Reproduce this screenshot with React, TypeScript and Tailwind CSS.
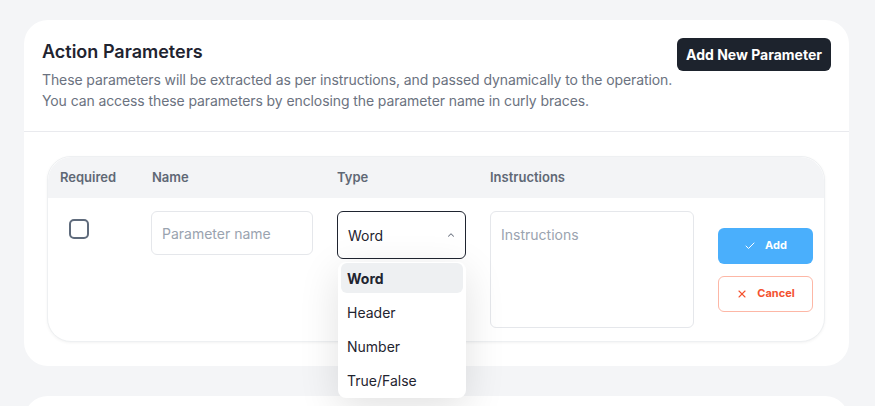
import React from "react";

const font = { fontFamily: "Inter, 'Noto Sans', sans-serif" };

function Check() {
  return (
    <svg width="12" height="12" viewBox="0 0 24 24" fill="none" stroke="currentColor" strokeWidth="2" strokeLinecap="round" strokeLinejoin="round">
      <path d="M20 6 9 17l-5-5" />
    </svg>
  );
}

function XIcon() {
  return (
    <svg width="12" height="12" viewBox="0 0 24 24" fill="none" stroke="currentColor" strokeWidth="2.2" strokeLinecap="round" strokeLinejoin="round">
      <path d="M18 6 6 18" />
      <path d="m6 6 12 12" />
    </svg>
  );
}

function ChevronUp() {
  return (
    <svg width="10" height="10" viewBox="0 0 24 24" fill="none" stroke="currentColor" strokeWidth="2.5" strokeLinecap="round" strokeLinejoin="round">
      <path d="m6 15 6-6 6 6" />
    </svg>
  );
}

export default function App() {
  const options = ["Word", "Header", "Number", "True/False"];
  return (
    <div className="min-h-[406px] h-[406px] overflow-hidden bg-[#f4f5f7] pt-5 pl-6 pr-[26px]" style={font}>
      <div className="bg-white rounded-3xl">
        <div className="flex justify-between px-[18px] pt-[18px] pb-5">
          <div>
            <h2 className="text-[18px] leading-[28px] font-semibold text-[#1f2430]">Action Parameters</h2>
            <p className="mt-[3px] text-[14px] leading-[21px] text-[#6b7280] whitespace-nowrap tracking-[-0.1px]">
              These parameters will be extracted as per instructions, and passed dynamically to the operation.
              <br />
              You can access these parameters by enclosing the parameter name in curly braces.
            </p>
          </div>
          <button className="h-[33px] px-[9px] rounded-md bg-[#1d232d] text-white text-[14px] font-bold whitespace-nowrap">
            Add New Parameter
          </button>
        </div>
        <div className="border-t border-[#e9eaee]" />
        <div className="p-6 pl-[23px]">
          <div className="rounded-3xl border border-[#eef0f2] shadow-[0_1px_3px_rgba(0,0,0,0.05)] bg-white">
            <div className="flex items-center h-[41px] bg-[#f3f4f6] rounded-t-3xl pl-[11px] pr-[11px] gap-6 text-[13px] font-semibold text-[#5f6875]">
              <div className="w-[68px] shrink-0 pl-[1px]">Required</div>
              <div className="w-[162px] shrink-0 pl-[1px]">Name</div>
              <div className="w-[129px] shrink-0">Type</div>
              <div className="w-[204px] shrink-0">Instructions</div>
            </div>
            <div className="flex pl-[11px] pr-[11px] pt-[13px] pb-[13px] gap-6">
              <div className="w-[68px] shrink-0">
                <div className="ml-[10px] mt-2 w-5 h-5 rounded-[5px] border-2 border-[#5f6b7c]" />
              </div>
              <div className="w-[162px] shrink-0">
                <div className="h-[44px] rounded-md border border-[#e5e7eb] flex items-center px-[10px] text-[14px] text-[#9aa3af]">
                  Parameter name
                </div>
              </div>
              <div className="w-[129px] shrink-0 relative">
                <div className="h-[48px] rounded-md border border-[#1f2430] flex items-center justify-between pl-[10px] pr-[9px] text-[14px] text-[#1f2430]">
                  <span>Word</span>
                  <span className="text-[#6b7280]"><ChevronUp /></span>
                </div>
                <div className="absolute left-[1px] top-[51px] w-[128px] bg-white rounded-lg shadow-[0_10px_40px_rgba(0,0,0,0.12)] z-10">
                  {options.map((o, i) => (
                    <div key={o} className="h-[34px] px-[3px] pt-[1px] pb-[3px]">
                      <div
                        className={
                          i === 0
                            ? "h-[30px] rounded-md bg-[#eef0f2] flex items-center pl-[6px] text-[14px] font-bold text-[#1f2430]"
                            : "h-[30px] rounded-md flex items-center pl-[6px] text-[14px] text-[#1f2430]"
                        }
                      >
                        {o}
                      </div>
                    </div>
                  ))}
                </div>
              </div>
              <div className="w-[204px] shrink-0">
                <div className="h-[117px] rounded-md border border-[#e5e7eb] px-[10px] pt-[14px] text-[14px] leading-[18px] text-[#9aa3af]">
                  Instructions
                </div>
              </div>
              <div className="w-[95px] shrink-0 self-center flex flex-col gap-3">
                <button className="h-9 rounded-md bg-[#4aaffc] text-white text-[11px] font-bold flex items-center justify-center gap-[9px]">
                  <Check />
                  <span>Add</span>
                </button>
                <button className="h-9 rounded-md border border-[#fdb7a6] bg-white text-[#f4522f] text-[11px] font-bold flex items-center justify-center gap-[9px]">
                  <XIcon />
                  <span>Cancel</span>
                </button>
              </div>
            </div>
          </div>
        </div>
      </div>
      <div className="mt-[30px] bg-white rounded-3xl h-[60px]" />
    </div>
  );
}
